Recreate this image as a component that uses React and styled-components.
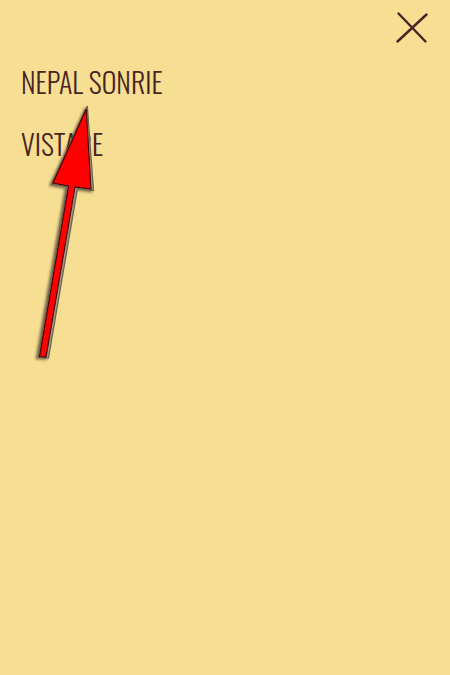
import { useState } from "react";
import styled, { createGlobalStyle } from "styled-components";

const GlobalStyle = createGlobalStyle`
    * {
        box-sizing: border-box;
    }
    body {
        margin: 0;
        background-color: #f6de93;
        font-family: "Oswald", "Liberation Sans Narrow", "Roboto Condensed", "Roboto", sans-serif;
    }
`;

const Wrapper = styled.div`
    display: flex;
    flex-direction: column;
    position: relative;
    width: 100%;
    min-height: 100vh;
    color: #482424;
`;

const Header = styled.header`
    display: flex;
    justify-content: flex-end;
    padding: 12px 22px 0;
`;

const CloseButton = styled.button`
    display: flex;
    padding: 0;
    border: none;
    background: none;
    color: inherit;
    cursor: pointer;
`;

const Menu = styled.nav`
    display: flex;
    flex-direction: column;
    align-items: flex-start;
    gap: 22px;
    padding: 18px 21px;
`;

const MenuLink = styled.a`
    color: inherit;
    font-size: 28px;
    font-weight: 300;
    line-height: 40px;
    text-decoration: none;
    text-transform: uppercase;
`;

const Pointer = styled.svg`
    position: absolute;
    top: 90px;
    left: 20px;
    pointer-events: none;
`;

const links = [
    { label: "Nepal Sonrie", href: "#nepal-sonrie" },
    { label: "Vistare", href: "#vistare" },
];

export default function App() {
    const [open, setOpen] = useState(true);

    return (
        <Wrapper>
            <GlobalStyle />
            {open && (
                <>
                    <Header>
                        <CloseButton aria-label="Cerrar" onClick={() => setOpen(false)}>
                            <svg width="32" height="32" viewBox="0 0 32 32" fill="none">
                                <path
                                    d="M2.5 1.5 29.5 29.5M30.5 2.5 1.5 29.5"
                                    stroke="currentColor"
                                    strokeWidth="2.4"
                                    strokeLinecap="round"
                                />
                            </svg>
                        </CloseButton>
                    </Header>
                    <Menu>
                        {links.map(({ label, href }) => (
                            <MenuLink href={href} key={href}>
                                {label}
                            </MenuLink>
                        ))}
                    </Menu>
                    <Pointer width="90" height="285" viewBox="20 90 90 285" aria-hidden="true">
                        <defs>
                            <filter id="shadow" x="-20%" y="-5%" width="140%" height="110%">
                                <feDropShadow
                                    dx="-2"
                                    dy="1.5"
                                    stdDeviation="1.2"
                                    floodColor="#3c3420"
                                    floodOpacity="0.6"
                                />
                            </filter>
                        </defs>
                        <g filter="url(#shadow)">
                            <path
                                d="M87.3 106 93.5 190.5 77.5 188.5 48.5 358 38 357.5 67 187 51.5 184Z"
                                fill="#a3977f"
                                stroke="#6b6254"
                                strokeWidth="1.2"
                            />
                            <path
                                d="M86.2 109 91 189 75 187 46 357 39.5 356.5 68.5 186 53 183Z"
                                fill="#ff0000"
                                stroke="#4a0505"
                                strokeWidth="1.2"
                            />
                        </g>
                    </Pointer>
                </>
            )}
        </Wrapper>
    );
}
